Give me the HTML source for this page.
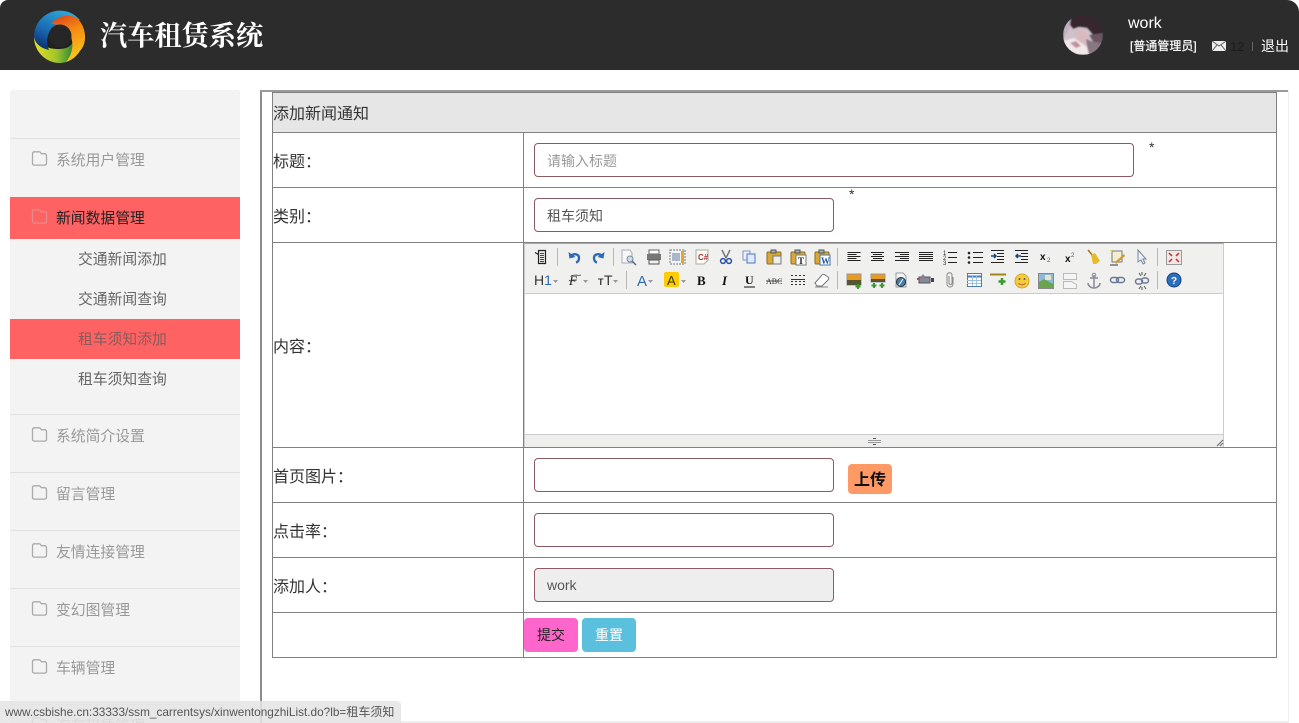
<!DOCTYPE html>
<html lang="zh-CN">
<head>
<meta charset="utf-8">
<title>汽车租赁系统</title>
<style>
html,body{margin:0;padding:0;width:1299px;height:723px;overflow:hidden;background:#fff;font-family:"Liberation Sans","Noto Sans CJK SC",sans-serif;color:#333}
div,span,svg,a{position:absolute;box-sizing:border-box;white-space:nowrap}
#page{left:0;top:0;width:1299px;height:723px;overflow:hidden;background:#fff}
#hd{left:0;top:0;width:1299px;height:70px;background:#2c2c2c;border-radius:8px 12px 0 0}
.title{left:100px;top:17px;font:bold 27.200px/38px "Liberation Serif","Noto Serif CJK SC",serif;color:#fff}
.side{left:10px;top:90px;width:230px;height:633px;background:#f3f3f3;border-radius:3px 3px 0 0}
.ln{left:10px;width:230px;height:1px;background:#e0e0e0}
.m{left:56px;font-size:14.800px;line-height:20px;color:#999}
.s{left:78px;font-size:14.800px;line-height:20px;color:#666}
.red{left:10px;width:230px;background:#ff6262}
.hl{left:272px;width:1005px;height:1px;background:#808080}
.vl{width:1px;background:#808080}
.lb{left:273px;font-size:16px;line-height:22px;color:#333}
.in{background:#fff;border:1px solid #8c5a60;border-radius:4px;height:34px;font-size:14px;line-height:34px;padding-left:12px;color:#555}
.btn{border-radius:4px;text-align:center}
</style>
</head>
<body>
<div id="page">
<div id="hd"></div>
<svg style="left:30px;top:7px" width="60" height="60" viewBox="0 0 60 60">
<defs>
<linearGradient id="gb" x1="0.7" y1="0" x2="0.2" y2="1"><stop offset="0" stop-color="#2fa8d8"/><stop offset=".55" stop-color="#1a6cb4"/><stop offset="1" stop-color="#0c2c70"/></linearGradient>
<linearGradient id="go" x1="0" y1="0" x2="0.3" y2="1"><stop offset="0" stop-color="#d83c1c"/><stop offset=".45" stop-color="#f58a12"/><stop offset="1" stop-color="#f8c41a"/></linearGradient>
<linearGradient id="gg" x1="0" y1="0" x2="1" y2="0"><stop offset="0" stop-color="#e4e022"/><stop offset=".55" stop-color="#a2c62c"/><stop offset="1" stop-color="#22803a"/></linearGradient>
</defs>
<circle cx="30" cy="30" r="25.500" fill="#1f1f1f"/>
<path d="M4 29A26 26 0 0 0 36 55.300C42 50 46 42 44 32C42 40 36 42 28 42C18 42 8 38 4 29Z" fill="url(#gg)"/>
<path d="M47 10A26 26 0 0 0 4 30C5 36 10 41 19 43C16 37 16 26 24 20C30 15 40 12 50 13Z" fill="url(#gb)"/>
<path d="M21 17C28 8 40 6 48 12C56 20 58 36 50 44C46 50 42 53 36 55C42 48 44 38 41 30C38 22 30 17 21 17Z" fill="url(#go)"/>
<circle cx="30" cy="29" r="11.500" fill="#262626"/>
</svg>
<div class="title">汽车租赁系统</div>

<svg style="left:1063px;top:15px" width="40" height="40" viewBox="0 0 40 40">
<defs>
<clipPath id="av"><circle cx="20" cy="20" r="20"/></clipPath>
<filter id="bl" x="-10%" y="-10%" width="120%" height="120%"><feGaussianBlur stdDeviation=".8"/></filter>
</defs>
<g clip-path="url(#av)">
<g filter="url(#bl)">
<rect width="40" height="40" fill="#cfc2cb"/>
<path d="M0 0h12L6 14 0 24z" fill="#bfb0c2"/>
<path d="M8 0h32v30l-7-2-3-8-6-7-8-1-6 2-3-4z" fill="#38262f"/>
<path d="M26 20l14-2v14l-8-2z" fill="#6a5663"/>
<path d="M12 14l9 1 5 8-4 6-6-3-4-7z" fill="#d9b9bf"/>
<path d="M0 26l11-3 13 9 4 8H0z" fill="#f1e8ea"/>
<path d="M7 28l6-2 5 5-5 2z" fill="#c4929f"/>
<path d="M23 24l8 3 9 1v12H26l-2-9z" fill="#897882"/>
</g>
</g>
</svg>
<div style="left:1128px;top:14px;font-size:16px;line-height:20px;color:#fff">work</div>
<div style="left:1130px;top:37px;font-size:12px;line-height:18px;color:#fff;-webkit-text-stroke:.2px #fff">[普通管理员]</div>
<svg style="left:1212px;top:41px" width="14" height="10" viewBox="0 0 14 10"><rect width="14" height="10" fill="#eee"/><path d="M0 0l7 5 7-5M0 10l5-6M14 10L9 4" fill="none" stroke="#666" stroke-width="1"/></svg>
<div style="left:1230px;top:38px;font-size:13px;line-height:18px;color:#1c1c1c">12</div>
<div style="left:1252px;top:42px;width:1px;height:9px;background:#666"></div>
<div style="left:1261px;top:36px;font-size:14px;line-height:20px;color:#fff">退出</div>

<div class="side"></div>
<div class="ln" style="top:138px"></div>
<div class="red" style="top:197px;height:42px"></div>
<div class="red" style="top:319px;height:40px"></div>
<div class="ln" style="top:414px"></div>
<div class="ln" style="top:472px"></div>
<div class="ln" style="top:530px"></div>
<div class="ln" style="top:588px"></div>
<div class="ln" style="top:646px"></div>
<div class="ln" style="top:704px"></div>
<svg style="left:0;top:0" width="60" height="723" viewBox="0 0 60 723" fill="none" stroke="#aaa" stroke-width="1.300" stroke-linejoin="round">
<path d="M32.500 153.500c0-1 .8-1.700 1.700-1.700h5.300c1 0 1.200 1.900 2.200 1.900h3c1 0 1.800.8 1.800 1.800v7.900c0 1-.8 1.700-1.800 1.700H34.300c-1 0-1.800-.7-1.800-1.700z"/>
<path stroke="#e58a8a" d="M32.500 211.500c0-1 .8-1.700 1.700-1.700h5.300c1 0 1.200 1.900 2.200 1.900h3c1 0 1.800.8 1.800 1.800v7.900c0 1-.8 1.700-1.800 1.700H34.300c-1 0-1.800-.7-1.800-1.700z"/>
<path d="M32.500 429.500c0-1 .8-1.700 1.700-1.700h5.300c1 0 1.200 1.900 2.200 1.900h3c1 0 1.800.8 1.800 1.800v7.900c0 1-.8 1.700-1.800 1.700H34.300c-1 0-1.800-.7-1.800-1.700z"/>
<path d="M32.500 487.500c0-1 .8-1.700 1.700-1.700h5.300c1 0 1.200 1.900 2.200 1.900h3c1 0 1.800.8 1.800 1.800v7.900c0 1-.8 1.700-1.800 1.700H34.300c-1 0-1.800-.7-1.800-1.700z"/>
<path d="M32.500 545.500c0-1 .8-1.700 1.700-1.700h5.300c1 0 1.200 1.900 2.200 1.900h3c1 0 1.800.8 1.800 1.800v7.900c0 1-.8 1.700-1.800 1.700H34.300c-1 0-1.800-.7-1.800-1.700z"/>
<path d="M32.500 603.500c0-1 .8-1.700 1.700-1.700h5.300c1 0 1.200 1.900 2.200 1.900h3c1 0 1.800.8 1.800 1.800v7.900c0 1-.8 1.700-1.800 1.700H34.300c-1 0-1.800-.7-1.800-1.700z"/>
<path d="M32.500 661.500c0-1 .8-1.700 1.700-1.700h5.300c1 0 1.200 1.900 2.200 1.900h3c1 0 1.800.8 1.800 1.800v7.900c0 1-.8 1.700-1.800 1.700H34.300c-1 0-1.800-.7-1.800-1.700z"/>
<path d="M32.500 719.500c0-1 .8-1.700 1.700-1.700h5.300c1 0 1.200 1.900 2.200 1.900h3c1 0 1.800.8 1.800 1.800v7.900c0 1-.8 1.700-1.800 1.700H34.300c-1 0-1.800-.7-1.800-1.700z"/>
</svg>
<div class="m" style="top:151px">系统用户管理</div>
<div class="m" style="top:209px;color:#222">新闻数据管理</div>
<div class="s" style="top:250px">交通新闻添加</div>
<div class="s" style="top:290px">交通新闻查询</div>
<div class="s" style="top:330px;color:#8a5a5a">租车须知添加</div>
<div class="s" style="top:370px">租车须知查询</div>
<div class="m" style="top:427px">系统简介设置</div>
<div class="m" style="top:485px">留言管理</div>
<div class="m" style="top:543px">友情连接管理</div>
<div class="m" style="top:601px">变幻图管理</div>
<div class="m" style="top:659px">车辆管理</div>
<div class="m" style="top:717px">汽车租赁管理</div>

<!-- iframe frame -->
<div style="left:260px;top:90px;width:2px;height:633px;background:#8c8c8c"></div>
<div style="left:260px;top:90px;width:1028px;height:2px;background:#9a9a9a"></div>
<div style="left:1288px;top:90px;width:1px;height:633px;background:#eee"></div>
<div style="left:262px;top:721px;width:1027px;height:2px;background:#eee"></div>

<!-- table -->
<div style="left:272px;top:92px;width:1005px;height:41px;background:#e6e6e6"></div>
<div class="hl" style="top:92px"></div>
<div class="hl" style="top:132px"></div>
<div class="hl" style="top:187px"></div>
<div class="hl" style="top:242px"></div>
<div class="hl" style="top:447px"></div>
<div class="hl" style="top:502px"></div>
<div class="hl" style="top:557px"></div>
<div class="hl" style="top:612px"></div>
<div class="hl" style="top:657px"></div>
<div class="vl" style="left:272px;top:92px;height:566px"></div>
<div class="vl" style="left:1276px;top:92px;height:566px"></div>
<div class="vl" style="left:523px;top:132px;height:526px"></div>

<div class="lb" style="top:104px">添加新闻通知</div>
<div class="lb" style="top:152px">标题：</div>
<div class="lb" style="top:207px">类别：</div>
<div class="lb" style="top:337px">内容：</div>
<div class="lb" style="top:467px">首页图片：</div>
<div class="lb" style="top:522px">点击率：</div>
<div class="lb" style="top:577px">添加人：</div>

<div class="in" style="left:534px;top:143px;width:600px;color:#999">请输入标题</div>
<div style="left:1149px;top:138px;font-size:14px;line-height:18px;color:#333">*</div>
<div class="in" style="left:534px;top:198px;width:300px">租车须知</div>
<div style="left:849px;top:185px;font-size:14px;line-height:18px;color:#333">*</div>
<div class="in" style="left:534px;top:458px;width:300px"></div>
<div class="btn" style="left:848px;top:464px;width:44px;height:30px;background:#ff9966;font-weight:bold;font-size:16px;line-height:33px;color:#111">上传</div>
<div class="in" style="left:534px;top:513px;width:300px"></div>
<div class="in" style="left:534px;top:568px;width:300px;background:#eee;line-height:32px">work</div>
<div class="btn" style="left:524px;top:618px;width:54px;height:34px;background:#ff66cc;font-size:14px;line-height:35px;color:#222">提交</div>
<div class="btn" style="left:582px;top:618px;width:54px;height:34px;background:#5bc0de;font-size:14px;line-height:35px;color:#fff">重置</div>

<!-- editor -->
<div style="left:524px;top:243px;width:700px;height:204px;background:#fff;border-left:1px solid #ccc;border-right:1px solid #ccc;border-top:1px solid #aaa"></div>
<div style="left:525px;top:244px;width:698px;height:50px;background:#f0f0ee;border-bottom:1px solid #ccc"></div>
<div style="left:525px;top:434px;width:698px;height:13px;background:#eeeeec;border-top:1px solid #ccc"></div>
<svg style="left:0;top:0" width="1299" height="723" viewBox="0 0 1299 723" fill="none">
<!-- separators -->
<g stroke="#b8b8b8"><path d="M557.500 248v18M613.500 248v18M837.500 248v18M1157.500 248v18M626.500 271v18M837.500 271v18M1157.500 271v18"/></g>
<!-- row 1 -->
<path d="M538.500 250.500h7v13h-7z" stroke="#222" stroke-width="1.200" fill="#e8e8e8"/><path d="M535 252.500l3.500 2" stroke="#222" stroke-width="1.200"/><path d="M540 253.500h4M540 255.500h4M540 257.500h4M540 259.500h4M540 261.500h4" stroke="#444"/>
<path d="M571 256c3-3 8-2 8 2 0 2-1 4-3 4.500" stroke="#2c6bb4" stroke-width="2.400"/><path d="M568.500 252l1 6.500 6-1.500z" fill="#2c6bb4"/>
<path d="M602 256c-3-3-8-2-8 2 0 2 1 4 3 4.500" stroke="#2c6bb4" stroke-width="2.400"/><path d="M604.500 252l-1 6.500-6-1.500z" fill="#2c6bb4"/>
<path d="M622 250h8l2 3v10h-10z" stroke="#aab" fill="#f8f8f8"/><circle cx="630" cy="259" r="3" stroke="#789" fill="#cde"/><path d="M632 261l4 4" stroke="#567" stroke-width="1.500"/>
<path d="M649 250h10v4h-10z" stroke="#666" fill="#fff"/><rect x="647" y="254" width="14" height="6" fill="#777"/><path d="M649 260h10v4h-10z" stroke="#555" fill="#eee"/>
<rect x="670" y="250" width="15" height="14" stroke="#777" stroke-dasharray="2 1" fill="#f4f4f4"/><rect x="672" y="253" width="8" height="8" fill="#a8b8c8"/><rect x="681" y="251" width="3" height="12" fill="#e5a62c"/>
<path d="M696 250h12v10l-4 4h-8z" stroke="#aaa" fill="#fdfdf4"/><text x="698" y="260" font-size="8" font-weight="bold" fill="#a33" font-family="Liberation Sans">C#</text>
<path d="M722 250l4 8M730 250l-4 8" stroke="#777" stroke-width="1.500"/><circle cx="723" cy="261" r="2.400" stroke="#2c4fa8" stroke-width="1.500"/><circle cx="729" cy="261" r="2.400" stroke="#2c4fa8" stroke-width="1.500"/>
<path d="M743 251h7v9h-7z" stroke="#7a98c8" fill="#eef"/><path d="M747 254h8v9h-8z" stroke="#4a78b8" fill="#dfeaff"/>
<rect x="767" y="252" width="14" height="12" rx="1" fill="#d8a838" stroke="#8a6a1c"/><rect x="771" y="250" width="5" height="3" fill="#aaa" stroke="#555"/><rect x="773" y="256" width="8" height="8" fill="#eee" stroke="#777"/>
<rect x="791" y="252" width="14" height="12" rx="1" fill="#d8a838" stroke="#8a6a1c"/><rect x="795" y="250" width="5" height="3" fill="#aaa" stroke="#555"/><rect x="796" y="255" width="10" height="10" fill="#fff" stroke="#777"/><text x="798" y="264" font-size="9" font-weight="bold" fill="#222" font-family="Liberation Serif">T</text>
<rect x="815" y="252" width="14" height="12" rx="1" fill="#d8a838" stroke="#8a6a1c"/><rect x="819" y="250" width="5" height="3" fill="#aaa" stroke="#555"/><rect x="820" y="255" width="10" height="10" fill="#fff" stroke="#47a"/><text x="821" y="264" font-size="9" font-weight="bold" fill="#2456a8" font-family="Liberation Serif">W</text>
<g stroke="#222">
<path d="M847.500 252.500h13M847.500 254.500h9M847.500 256.500h13M847.500 258.500h9M847.500 260.500h13"/>
<path d="M871 252.500h13M873 254.500h9M871 256.500h13M873 258.500h9M871 260.500h13"/>
<path d="M895 252.500h14M900 254.500h9M895 256.500h14M900 258.500h9M895 260.500h14"/>
<path d="M919 252.500h14M919 254.500h14M919 256.500h14M919 258.500h14M919 260.500h14"/>
<path d="M948 252.500h9M948 257.500h9M948 262.500h9"/>
<path d="M973 252.500h10M973 257.500h10M973 262.500h10"/>
<path d="M997 253.500h7M997 256.500h7M997 259.500h7M991 262.500h13M991 250.500h13"/>
<path d="M1021 253.500h7M1021 256.500h7M1021 259.500h7M1015 262.500h13M1015 250.500h13"/>
</g>
<g fill="#333" font-family="Liberation Sans" font-size="6"><text x="943" y="255">1</text><text x="943" y="260">2</text><text x="943" y="265">3</text></g>
<g fill="#222"><circle cx="969" cy="253" r="1.300"/><circle cx="969" cy="257.500" r="1.300"/><circle cx="969" cy="262.500" r="1.300"/></g>
<path d="M991 256h5M994 254l2 2-2 2" stroke="#15457c" stroke-width="1.500"/><path d="M1021 256h-5M1018 254l-2 2 2 2" stroke="#15457c" stroke-width="1.500"/>
<text x="1040" y="260" font-size="10" font-weight="bold" fill="#111" font-family="Liberation Sans">x</text><text x="1047" y="262" font-size="6" fill="#555" font-family="Liberation Sans">2</text>
<text x="1065" y="262" font-size="10" font-weight="bold" fill="#111" font-family="Liberation Sans">x</text><text x="1071" y="257" font-size="6" fill="#555" font-family="Liberation Sans">2</text>
<path d="M1088 250l5 6" stroke="#a5741c" stroke-width="1.500"/><path d="M1091 255l4-2 5 8-4 3h-3z" fill="#e9b92c"/>
<path d="M1112 251h10v11h-10z" stroke="#777" fill="#f5edd0"/><path d="M1115 262l9-8 1 2-9 8z" fill="#cf9a2c"/><path d="M1110 250l2 2" stroke="#ed3"/><path d="M1110 265h8" stroke="#333"/>
<path d="M1138 250v12l3-2 2 4 2-1-2-4h3z" stroke="#789" fill="#eef"/>
<rect x="1166.500" y="250.500" width="15" height="14" fill="#f5e5e5" stroke="#999"/><path d="M1169 253l3 3M1179 253l-3 3M1169 262l3-3M1179 262l-3-3" stroke="#b33" stroke-width="1.500"/>
<!-- row 2 -->
<text x="534" y="285" font-size="14" fill="#333" font-family="Liberation Sans">H<tspan fill="#2c6bb4">1</tspan></text><path d="M553 280h5l-2.500 3z" fill="#999"/>
<text x="569" y="285" font-size="13" font-style="italic" fill="#222" font-family="Liberation Serif">F</text><path d="M571 276c3-2 6 0 10-1M570 280c-1 1-1 1 1 1M572 280h5" stroke="#333" stroke-width=".8"/><path d="M583 280h5l-2.500 3z" fill="#999"/>
<text x="598" y="285" font-size="9" font-weight="bold" fill="#333" font-family="Liberation Sans">T</text><text x="604" y="285" font-size="14" fill="#333" font-family="Liberation Sans">T</text><path d="M613 280h5l-2.500 3z" fill="#999"/>
<text x="637" y="286" font-size="15" fill="#2c6bb4" font-family="Liberation Sans">A</text><path d="M648 280h5l-2.500 3z" fill="#999"/>
<rect x="664" y="272" width="15" height="15" rx="2" fill="#fc0"/><text x="667" y="285" font-size="13" fill="#333" font-family="Liberation Sans">A</text><path d="M681 280h5l-2.500 3z" fill="#999"/>
<text x="697" y="285" font-size="13" font-weight="bold" fill="#111" font-family="Liberation Serif">B</text>
<text x="722" y="285" font-size="13" font-weight="bold" font-style="italic" fill="#111" font-family="Liberation Serif">I</text>
<text x="745" y="284" font-size="12" font-weight="bold" fill="#111" font-family="Liberation Serif">U</text><path d="M744 287h11" stroke="#111"/>
<text x="766" y="284" font-size="8" fill="#333" font-family="Liberation Serif">ABC</text><path d="M766 281h16" stroke="#333" stroke-width=".8"/>
<path d="M791 279.500h14" stroke="#333"/><path d="M791 275.500h14M791 284.500h14" stroke="#333" stroke-dasharray="2 2"/><path d="M791 281.500h14" stroke="#333" stroke-dasharray="2 2"/>
<path d="M815 283l7-8c1-1 2-1 3 0l3 2c1 1 1 2 0 3l-6 6h-5z" stroke="#777" fill="#fff"/><path d="M815 287h13" stroke="#888"/>
<rect x="847" y="274" width="14" height="11" fill="#ea9a1c" stroke="#999"/><rect x="847" y="280" width="14" height="5" fill="#553"/><path d="M858 284v5M855.500 286.500h5" stroke="#3a9a2c" stroke-width="2"/>
<rect x="871" y="274" width="14" height="8" fill="#ea9a1c" stroke="#999"/><rect x="871" y="279" width="14" height="3" fill="#553"/><path d="M874 283v5M871.500 285.500h5M882 283v5M879.500 285.500h5" stroke="#3a9a2c" stroke-width="2"/>
<path d="M896 273h7l3 3v11h-10z" stroke="#999" fill="#f5f5f5"/><circle cx="901" cy="282" r="4.500" fill="#4a7ea8" stroke="#234"/><path d="M899 285l4-6" stroke="#fff"/>
<rect x="919" y="277" width="11" height="6" fill="#889" stroke="#556"/><circle cx="923" cy="276" r="1.500" fill="#889"/><path d="M931 278h3v4h-3z" fill="#445"/><path d="M917 279h2" stroke="#b44" stroke-width="2"/>
<path d="M953 277v7c0 4-6 4-6 0v-9c0-3 5-3 5 0v8c0 2-3 2-3 0v-7" stroke="#888"/>
<rect x="967.500" y="273.500" width="14" height="13" fill="#fff" stroke="#4a7eb8"/><path d="M967 276.500h14" stroke="#4a7eb8" stroke-width="2"/><path d="M967 280.500h14M967 283.500h14M972.500 276v10M976.500 276v10" stroke="#9cc0e0"/>
<path d="M990 274.500h16" stroke="#a5841c" stroke-width="2"/><path d="M1002 278v7M998.500 281.500h7" stroke="#3a9a2c" stroke-width="2.500"/>
<circle cx="1022" cy="281" r="7" fill="#f5cc3c" stroke="#d8a62c"/><circle cx="1019.500" cy="279" r="1" fill="#555"/><circle cx="1024.500" cy="279" r="1" fill="#555"/><path d="M1018.500 283c2 2.500 5 2.500 7 0" stroke="#a55"/>
<rect x="1038.500" y="273.500" width="15" height="15" fill="#8fb8d8" stroke="#888"/><path d="M1039 288v-6l5-3 9 5v4z" fill="#6aa54c"/><rect x="1045" y="275" width="6" height="5" fill="#e5e5c5"/>
<path d="M1063.500 273.500h13v6h-13zM1063.500 281.500h8l5 3v4h-13z" stroke="#bbb" fill="#f5f5f5"/>
<path d="M1094 275v12M1090 278h8M1088 283c0 3 3 5 6 5s6-2 6-5" stroke="#889" stroke-width="1.500"/><circle cx="1094" cy="275" r="1.800" stroke="#889"/>
<rect x="1110.500" y="277.500" width="8" height="5" rx="2.500" stroke="#6a7a95" stroke-width="1.500"/><rect x="1116.500" y="277.500" width="8" height="5" rx="2.500" stroke="#6a7a95" stroke-width="1.500"/>
<rect x="1135.500" y="279" width="7" height="5" rx="2.500" stroke="#6a7a95" stroke-width="1.500"/><rect x="1141.500" y="278" width="7" height="5" rx="2.500" stroke="#6a7a95" stroke-width="1.500"/><path d="M1139 273l2 3M1146 273l-2 3M1139 289l2-3M1146 289l-2-3M1142 272v3M1142 287v3" stroke="#555"/>
<circle cx="1174" cy="280" r="7" fill="#2c6fc0" stroke="#15407c"/><text x="1171" y="284" font-size="10" font-weight="bold" fill="#fff" font-family="Liberation Sans">?</text>
<!-- resize -->
<path d="M868 440.500h13M868 442.500h13" stroke="#999"/><path d="M873 438.500h3M873 444.500h3" stroke="#555"/>
<path d="M1217 446l6-6M1220 446l3-3" stroke="#666"/>
</svg>

<!-- status bar -->
<div style="left:0;top:701px;width:401px;height:22px;background:rgba(228,228,228,.85);border-radius:0 4px 0 0;padding-left:5px;font-size:11.800px;line-height:23px;color:#555">www.csbishe.cn:33333/ssm_carrentsys/xinwentongzhiList.do?lb=<span style="position:static;font-size:12px">租车须知</span></div>
</div>
</body>
</html>
